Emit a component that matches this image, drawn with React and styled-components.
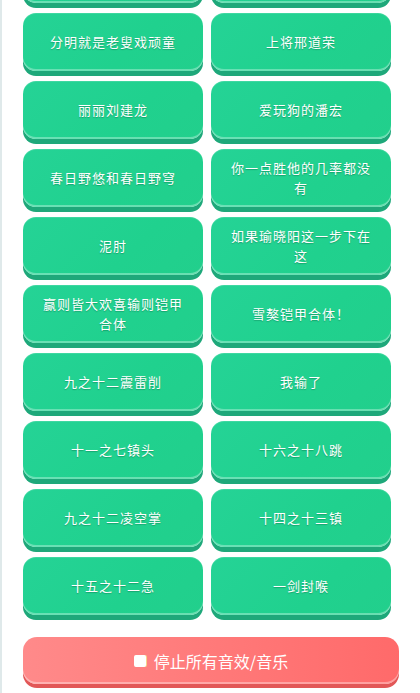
import React from "react";
import styled, { createGlobalStyle } from "styled-components";

// the first row is scrolled almost out of view, only its bottom edge shows
const sounds = [
  { id: 1, name: "" },
  { id: 2, name: "" },
  { id: 3, name: "分明就是老叟戏顽童" },
  { id: 4, name: "上将邢道荣" },
  { id: 5, name: "丽丽刘建龙" },
  { id: 6, name: "爱玩狗的潘宏" },
  { id: 7, name: "春日野悠和春日野穹" },
  { id: 8, name: "你一点胜他的几率都没有" },
  { id: 9, name: "泥肘" },
  { id: 10, name: "如果瑜晓阳这一步下在这" },
  { id: 11, name: "赢则皆大欢喜输则铠甲合体" },
  { id: 12, name: "雪獒铠甲合体！" },
  { id: 13, name: "九之十二震雷削" },
  { id: 14, name: "我输了" },
  { id: 15, name: "十一之七镇头" },
  { id: 16, name: "十六之十八跳" },
  { id: 17, name: "九之十二凌空掌" },
  { id: 18, name: "十四之十三镇" },
  { id: 19, name: "十五之十二急" },
  { id: 20, name: "一剑封喉" },
];

const GlobalStyle = createGlobalStyle`
  html, body {
    margin: 0;
    padding: 0;
    background: #ffffff;
    overflow: hidden;
  }
  * {
    box-sizing: border-box;
  }
`;

const App = () => {
  return (
    <>
      <GlobalStyle />
      <SoundBoard>
        <SoundGrid>
          {sounds.map((s) => (
            <SoundButton key={s.id}>{s.name}</SoundButton>
          ))}
        </SoundGrid>
        <StopButton>
          <StopIcon />
          停止所有音效/音乐
        </StopButton>
      </SoundBoard>
    </>
  );
};

const SoundBoard = styled.div`
  margin-top: -55px;
  height: 760px;
  border-left: 2px solid #dfe9ea;
  padding: 0 21px 0 21px;
  display: flex;
  flex-direction: column;
`;

const SoundGrid = styled.div`
  display: grid;
  grid-template-columns: 180px 180px;
  column-gap: 8px;
  row-gap: 10px;
`;

const SoundButton = styled.button`
  height: 58px;
  padding: 0 18px;
  border: none;
  border-radius: 13px;
  background: linear-gradient(135deg, #25d396 0%, #20d18e 60%, #22cf8c 100%);
  box-shadow: inset 0 -2px 0 rgba(255, 255, 255, 0.32),
    inset 0 1px 0 rgba(255, 255, 255, 0.12), 0 5px 0 #1ea87a;
  color: #ffffff;
  font-family: "Noto Sans CJK SC", "Noto Sans", sans-serif;
  font-size: 13px;
  letter-spacing: 1px;
  line-height: 20px;
  text-align: center;
  text-shadow: 0 1px 1px rgba(0, 80, 50, 0.35);
  cursor: pointer;
`;

const StopButton = styled.button`
  margin-top: 22px;
  height: 47px;
  width: 376px;
  border: none;
  border-radius: 14px;
  background: linear-gradient(90deg, #ff8a8a 0%, #ff7878 55%, #ff6a6a 100%);
  box-shadow: inset 0 -2px 0 rgba(255, 255, 255, 0.35), 0 4px 0 #e25757;
  color: #ffffff;
  font-family: "Noto Sans CJK SC", "Noto Sans", sans-serif;
  font-size: 16px;
  display: flex;
  align-items: center;
  justify-content: center;
  gap: 8px;
  cursor: pointer;
`;

const StopIcon = styled.span`
  width: 12px;
  height: 12px;
  border-radius: 2px;
  background: #ffffff;
  box-shadow: 1px 0 0 #f5d48a;
`;

export default App;
